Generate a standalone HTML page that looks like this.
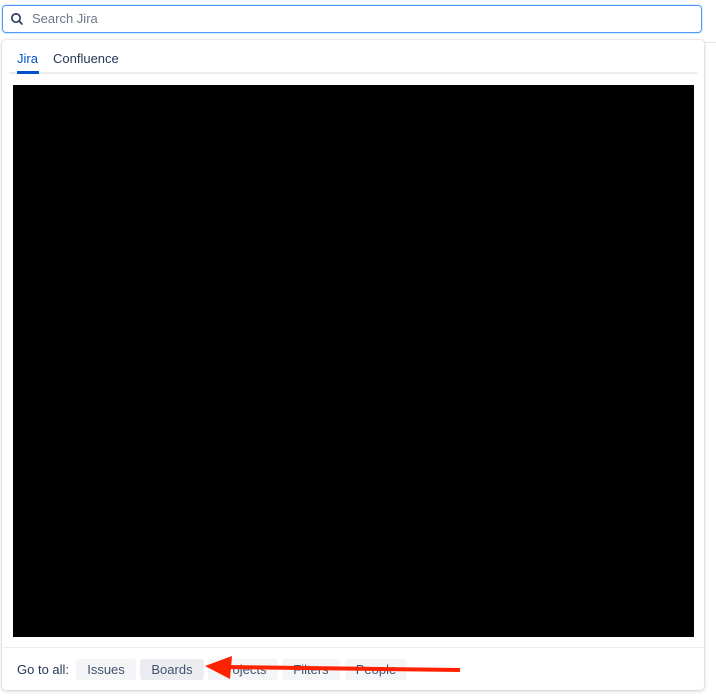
<!DOCTYPE html>
<html><head><style>
body{margin:0;width:716px;height:699px;background:#fff;position:relative;font-family:"Liberation Sans",sans-serif;overflow:hidden}
.in{position:absolute;left:2px;top:5px;width:698px;height:26px;border:1px solid #4c9aff;border-radius:4px;box-shadow:0 0 0 1px #4c9aff33}
.in span{position:absolute;left:29px;top:5px;font-size:13px;color:#6b778c}
.panel{position:absolute;left:2px;top:40px;width:702px;height:650px;border-radius:4px;box-shadow:0 1px 4px rgba(9,30,66,.2),0 0 1px rgba(9,30,66,.3);background:#fff}
.t{position:absolute;font-size:13px;top:51px;color:#253858}
.b{position:absolute;top:659px;height:21px;background:#f4f5f7;border-radius:3px;font-size:13px;color:#42526e;line-height:21px;text-align:center}
</style></head><body>
<div style="position:absolute;left:704px;top:42px;width:12px;height:1px;background:#e4e5e8"></div>
<div class="in"><svg style="position:absolute;left:7px;top:6px" width="14" height="14" viewBox="0 0 14 14"><circle cx="6" cy="6" r="4.2" fill="none" stroke="#253858" stroke-width="1.6"/><line x1="9" y1="9" x2="12" y2="12" stroke="#253858" stroke-width="1.6" stroke-linecap="round"/></svg><span>Search Jira</span></div>
<div class="panel"></div>
<div class="t" style="left:17px;color:#0052cc">Jira</div>
<div class="t" style="left:53px">Confluence</div>
<div style="position:absolute;left:9px;top:72px;width:688px;height:2px;background:#ebecf0"></div>
<div style="position:absolute;left:17px;top:71px;width:22px;height:3px;background:#0052cc"></div>
<div style="position:absolute;left:13px;top:85px;width:681px;height:552px;background:#000"></div>
<div style="position:absolute;left:3px;top:647px;width:700px;height:1px;background:#ebecf0"></div>
<div style="position:absolute;left:17px;top:662px;font-size:13px;color:#253858">Go to all:</div>
<div class="b" style="left:76px;width:60px">Issues</div>
<div class="b" style="left:140px;width:64px;background:#ebecf0">Boards</div>
<div class="b" style="left:208px;width:70px">Projects</div>
<div class="b" style="left:282px;width:58px">Filters</div>
<div class="b" style="left:345px;width:62px">People</div>
<svg style="position:absolute;left:0;top:0" width="716" height="699"><line x1="225" y1="667" x2="460" y2="670" stroke="#ff2200" stroke-width="4"/><polygon points="205,666 232,656 230,679" fill="#ff2200"/></svg>
</body></html>
